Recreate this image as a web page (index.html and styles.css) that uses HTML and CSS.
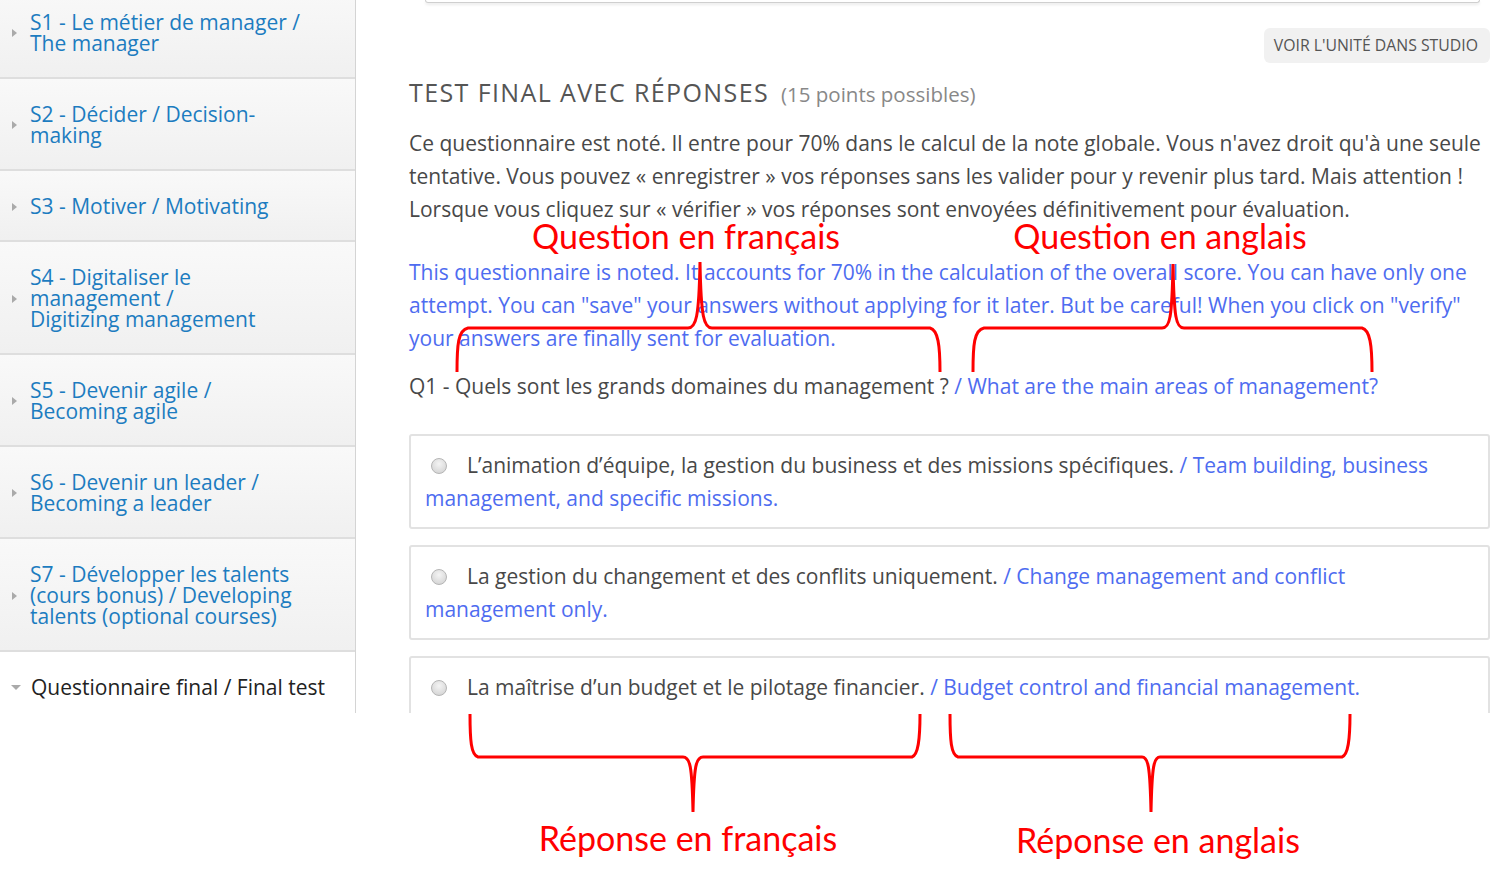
FILE: index.html
```html
<!DOCTYPE html>
<html lang="fr">

<head>
    <meta charset="UTF-8">
    <meta name="viewport" content="width=device-width, initial-scale=1.0">
    <link rel="stylesheet" href="styles.css">
    <title>Test final avec réponses</title>
</head>

<body>
    <div class="shot">
        <ul class="nav">
            <li class="nav-item"><span class="arrow"></span><a href="#">S1 - Le métier de manager / The manager</a></li>
            <li class="nav-item"><span class="arrow"></span><a href="#">S2 - Décider / Decision-making</a></li>
            <li class="nav-item"><span class="arrow"></span><a href="#">S3 - Motiver / Motivating</a></li>
            <li class="nav-item"><span class="arrow"></span><a href="#">S4 - Digitaliser le management / Digitizing&nbsp;management</a></li>
            <li class="nav-item"><span class="arrow"></span><a href="#">S5 - Devenir agile / Becoming agile</a></li>
            <li class="nav-item"><span class="arrow"></span><a href="#">S6 - Devenir un leader / Becoming a leader</a></li>
            <li class="nav-item"><span class="arrow"></span><a href="#">S7 - Développer les talents (cours bonus) / Developing talents (optional courses)</a></li>
            <li class="nav-item current"><span class="arrow down"></span><a href="#">Questionnaire final / Final test</a></li>
        </ul>

        <div class="main">
            <div class="cut-bar"></div>
            <div class="unit-actions">
                <a class="studio-btn" href="#">VOIR L'UNITÉ DANS STUDIO</a>
            </div>
            <h2 class="problem-title">TEST FINAL AVEC RÉPONSES <span class="points">(15 points possibles)</span></h2>
            <p class="intro">Ce questionnaire est noté. Il entre pour 70% dans le calcul de la note globale. Vous n'avez droit qu'à une seule tentative. Vous pouvez « enregistrer » vos réponses sans les valider pour y revenir plus tard. Mais attention ! Lorsque vous cliquez sur « vérifier » vos réponses sont envoyées définitivement pour évaluation.</p>
            <p class="intro en">This questionnaire is noted. It accounts for 70% in the calculation of the overall score. You can have only one attempt. You can "save" your answers without applying for it later. But be careful! When you click on "verify" your answers are finally sent for evaluation.</p>
            <p class="question">Q1 - Quels sont les grands domaines du management ? <span class="en">/ What are the main areas of management?</span></p>

            <div class="choices">
                <div class="choice">
                    <span class="radio"></span>L’animation d’équipe, la gestion du business et des missions spécifiques. <span class="en">/ Team building, business management, and specific missions.</span>
                </div>
                <div class="choice">
                    <span class="radio"></span>La gestion du changement et des conflits uniquement. <span class="en">/ Change management and conflict management only.</span>
                </div>
                <div class="choice">
                    <span class="radio"></span>La maîtrise d’un budget et le pilotage financier. <span class="en">/ Budget control and financial management.</span>
                </div>
            </div>
        </div>
    </div>

    <!-- annotations -->
    <svg class="braces" width="1499" height="884" viewBox="0 0 1499 884">
        <path d="M457 372 C457 345 458 330 468 328 L688 328 C696 328 699 318 700 262 C701 318 704 328 712 328 L930 328 C938 330 940 345 940 372" />
        <path d="M973 372 C973 345 974 330 984 328 L1162 328 C1170 328 1172 318 1173 264 C1174 318 1176 328 1184 328 L1362 328 C1370 330 1372 345 1372 372" />
        <path d="M470 714 C470 740 471 755 478 757 L683 757 C690 757 692 765 693 812 C694 765 696 757 703 757 L912 757 C918 755 920 740 920 714" />
        <path d="M950 714 C950 740 951 755 958 757 L1142 757 C1148 757 1150 765 1151 812 C1152 765 1154 757 1160 757 L1342 757 C1348 755 1350 740 1350 714" />
    </svg>
    <div class="label q-fr">Question en français</div>
    <div class="label q-en">Question en anglais</div>
    <div class="label r-fr">Réponse en français</div>
    <div class="label r-en">Réponse en anglais</div>
</body>

</html>
```

FILE: styles.css
```css
body {
    margin: 0;
    width: 1499px;
    height: 884px;
    position: relative;
    background: #fff;
    font-family: "Open Sans", "Noto Sans", sans-serif;
    overflow: hidden;
}

.shot {
    display: flex;
    height: 713px;
    overflow: hidden;
}

/* sidebar */
.nav {
    list-style: none;
    margin: -13px 0 0 0;
    padding: 0;
    width: 356px;
    flex-shrink: 0;
    box-sizing: border-box;
    border-right: 1px solid #d4d4d4;
    background: #f4f4f4;
}

.nav-item {
    display: flex;
    align-items: center;
    padding: 25px 51px 23px 12px;
    border-bottom: 2px solid #dedede;
    background: linear-gradient(#f9f9f9, #f0f0f0);
}

.nav-item a {
    color: #1c7cc0;
    text-decoration: none;
    font-size: 21px;
    line-height: 21px;
}

.arrow {
    flex-shrink: 0;
    width: 0;
    height: 0;
    margin-right: 13px;
    border-top: 4px solid transparent;
    border-bottom: 4px solid transparent;
    border-left: 5px solid #aaa;
}

.arrow.down {
    margin-left: -1px;
    margin-right: 10px;
    border-left: 5px solid transparent;
    border-right: 5px solid transparent;
    border-top: 5px solid #aaa;
    border-bottom: 0;
}

.nav-item.current {
    padding-right: 10px;
    background: #fff;
    border-bottom: 0;
}

.nav-item.current a {
    color: #222;
}

/* main column */
.main {
    flex: 1;
    padding: 0 9px 0 53px;
    color: #484848;
}

.cut-bar {
    height: 2px;
    margin: 0 10px 0 16px;
    border: 1px solid #cfcfcf;
    border-top: 0;
    border-radius: 0 0 14px 14px;
    box-shadow: 0 2px 3px rgba(0, 0, 0, 0.08);
}

.unit-actions {
    display: flex;
    justify-content: flex-end;
    margin-top: 25px;
}

.studio-btn {
    display: block;
    height: 35px;
    line-height: 35px;
    padding: 0 12px 0 10px;
    background: #f1f1f1;
    border-radius: 6px;
    color: #555;
    font-size: 15.8px;
    text-decoration: none;
}

.problem-title {
    margin: 14px 0 0 0;
    font-size: 25px;
    line-height: 30px;
    font-weight: normal;
    letter-spacing: 1.4px;
    color: #555;
}

.points {
    font-size: 20.5px;
    letter-spacing: 0;
    color: #888;
    margin-left: 4px;
}

.intro {
    margin: 18px 0 0 0;
    font-size: 21px;
    line-height: 33px;
}

.intro.en {
    margin-top: 30px;
}

.en {
    color: #4e6cf0;
}

.question {
    margin: 15px 0 0 0;
    font-size: 21px;
    line-height: 33px;
}

.choices {
    display: flex;
    flex-direction: column;
    gap: 16px;
    margin-top: 31px;
}

.choice {
    padding: 13px 14px 12px 14px;
    border: 2px solid #e2e2e2;
    border-radius: 3px;
    font-size: 21px;
    line-height: 33px;
}

.radio {
    display: inline-block;
    width: 14px;
    height: 14px;
    margin: 0 20px 0 6px;
    border: 1px solid #b5b5b5;
    border-radius: 50%;
    background: radial-gradient(circle at 50% 35%, #f4f4f4, #cfcfcf);
    vertical-align: -1px;
}

/* red annotations */
.braces {
    position: absolute;
    top: 0;
    left: 0;
    pointer-events: none;
}

.braces path {
    fill: none;
    stroke: #f00;
    stroke-width: 3;
}

.label {
    position: absolute;
    width: 400px;
    text-align: center;
    color: #f00;
    font-family: Lato, "Noto Sans", sans-serif;
    font-size: 34px;
    line-height: 40px;
}

.q-fr {
    left: 486px;
    top: 216px;
}

.q-en {
    left: 960px;
    top: 216px;
}

.r-fr {
    left: 488px;
    top: 818px;
}

.r-en {
    left: 958px;
    top: 820px;
}
```
